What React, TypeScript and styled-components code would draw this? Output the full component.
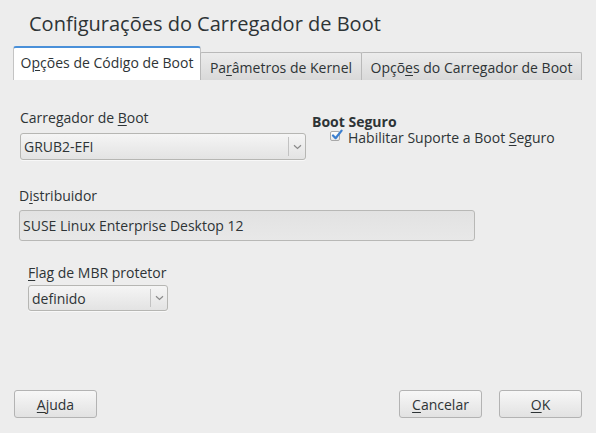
import React from "react";
import styled, { createGlobalStyle } from "styled-components";

const Global = createGlobalStyle`
  html, body { margin: 0; padding: 0; background: #ededed; }
  body { font-family: "Open Sans", "DejaVu Sans", sans-serif; color: #2e3436; }
`;

const Window = styled.div`
  width: 596px;
  height: 433px;
  background: #ededed;
  display: flex;
  flex-direction: column;
  box-sizing: border-box;
  overflow: hidden;
`;

const Title = styled.h1`
  margin: 0;
  padding: 12px 0 0 29px;
  font-size: 20px;
  line-height: 24px;
  font-weight: 400;
  color: #2e3436;
  height: 34px;
  box-sizing: border-box;
`;

const TabBar = styled.div`
  display: flex;
  align-items: flex-end;
  margin: 12px 0 0 13px;
  height: 34px;
`;

const Tab = styled.div<{ $active?: boolean; $w: number }>`
  box-sizing: border-box;
  width: ${(p) => p.$w}px;
  height: ${(p) => (p.$active ? 34 : 28)}px;
  display: flex;
  align-items: center;
  justify-content: center;
  font-size: 14px;
  color: #2e3436;
  white-space: nowrap;
  border: 1px solid ${(p) => (p.$active ? "#c4c4c4" : "#b9b9b9")};
  border-bottom: none;
  border-radius: ${(p) => (p.$active ? "3px 3px 0 0" : "2px 2px 0 0")};
  background: ${(p) =>
    p.$active ? "#ffffff" : "linear-gradient(#ececec, #d9d9d9)"};
  ${(p) => (p.$active ? "border-top: 2px solid #4a90d9; padding-bottom: 4px;" : "padding-top: 1px;")}
  margin-left: ${(p) => (p.$active ? 0 : -1)}px;
`;

const Content = styled.div`
  display: flex;
  flex-direction: column;
  padding: 29px 0 0 0;
  flex: 1;
`;

const TopRow = styled.div`
  display: flex;
  align-items: flex-start;
`;

const Field = styled.div<{ $left: number; $top?: number }>`
  display: flex;
  flex-direction: column;
  margin-left: ${(p) => p.$left}px;
  margin-top: ${(p) => p.$top ?? 0}px;
`;

const Label = styled.label`
  font-size: 14px;
  line-height: 17px;
  color: #2e3436;
  height: 17px;
  white-space: nowrap;
`;

const U = styled.span`
  text-decoration: underline;
  text-underline-offset: 2px;
`;

const Combo = styled.div<{ $w: number; $h: number; $mt: number }>`
  box-sizing: border-box;
  width: ${(p) => p.$w}px;
  height: ${(p) => p.$h}px;
  margin-top: ${(p) => p.$mt}px;
  border: 1px solid #b6b6b3;
  border-radius: 3px;
  background: linear-gradient(#f5f5f5, #e3e3e3);
  display: flex;
  align-items: center;
  font-size: 14px;
  color: #2e3436;
  box-shadow: 0 1px 0 rgba(255, 255, 255, 0.6);
`;

const ComboText = styled.span`
  flex: 1;
  padding-left: 3px;
`;

const ComboSep = styled.span`
  align-self: stretch;
  width: 1px;
  margin: 3px 0;
  background: #c2c2c2;
`;

const ComboArrow = styled.span`
  width: 16px;
  display: flex;
  align-items: center;
  justify-content: center;
`;

const SecureBlock = styled.div`
  display: flex;
  flex-direction: column;
  margin-left: 6px;
  margin-top: 4px;
`;

const BoldLabel = styled.div`
  font-size: 14px;
  line-height: 17px;
  font-weight: 700;
  color: #2e3436;
`;

const CheckRow = styled.div`
  display: flex;
  align-items: center;
  gap: 8px;
  margin-left: 18px;
  font-size: 14px;
  line-height: 17px;
  margin-top: -1px;
  white-space: nowrap;
`;

const CheckBox = styled.span`
  width: 10px;
  height: 10px;
  box-sizing: border-box;
  border: 1px solid #a8a8a8;
  border-radius: 2px;
  background: linear-gradient(#ffffff, #e8e8e8);
  position: relative;
  margin-top: -3px;
`;

const CheckMark = styled.svg`
  position: absolute;
  left: 0px;
  top: -3px;
`;

const Entry = styled.div`
  box-sizing: border-box;
  width: 456px;
  height: 31px;
  margin-top: 6px;
  border: 1px solid #b8b8b6;
  border-radius: 3px;
  background: linear-gradient(#e2e2e2, #e8e8e8);
  display: flex;
  align-items: center;
  padding-left: 3px;
  font-size: 14px;
  color: #2e3436;
`;

const Buttons = styled.div`
  display: flex;
  align-items: center;
  padding: 0 14px 15px 14px;
`;

const Spacer = styled.div`
  flex: 1;
`;

const Button = styled.button<{ $gap?: number }>`
  box-sizing: border-box;
  width: 83px;
  height: 28px;
  margin-left: ${(p) => p.$gap ?? 0}px;
  border: 1px solid #b3b3b3;
  border-radius: 3px;
  background: linear-gradient(#f7f7f7, #e2e2e2);
  font-family: "Open Sans", "DejaVu Sans", sans-serif;
  font-size: 14px;
  color: #2e3436;
  padding: 0;
`;

const Arrow = () => (
  <svg width="9" height="6" viewBox="0 0 9 6">
    <path d="M1 1.2 L4.5 4.5 L8 1.2" fill="none" stroke="#8a8a8a" strokeWidth="1.2" />
  </svg>
);

export default function App() {
  return (
    <>
      <Global />
      <Window>
        <Title>Configurações do Carregador de Boot</Title>
        <TabBar>
          <Tab $active $w={188}>
            <span>O<U>p</U>ções de Código de Boot</span>
          </Tab>
          <Tab $w={162}>
            <span>Pa<U>r</U>âmetros de Kernel</span>
          </Tab>
          <Tab $w={221}>
            <span>Opçõ<U>e</U>s do Carregador de Boot</span>
          </Tab>
        </TabBar>
        <Content>
          <TopRow>
            <Field $left={20}>
              <Label>Carregador de <U>B</U>oot</Label>
              <Combo $w={286} $h={27} $mt={7}>
                <ComboText>GRUB2-EFI</ComboText>
                <ComboSep />
                <ComboArrow><Arrow /></ComboArrow>
              </Combo>
            </Field>
            <SecureBlock>
              <BoldLabel>Boot Seguro</BoldLabel>
              <CheckRow>
                <CheckBox>
                  <CheckMark width="12" height="12" viewBox="0 0 12 12">
                    <path d="M2 6.5 L4.6 9.2 L10.6 1.6" fill="none" stroke="#3b7fd0" strokeWidth="2.2" strokeLinecap="round" strokeLinejoin="round" />
                  </CheckMark>
                </CheckBox>
                <span>Habilitar Suporte a Boot <U>S</U>eguro</span>
              </CheckRow>
            </SecureBlock>
          </TopRow>
          <Field $left={19} $top={27}>
            <Label>D<U>i</U>stribuidor</Label>
            <Entry>SUSE Linux Enterprise Desktop 12</Entry>
          </Field>
          <Field $left={28} $top={23}>
            <Label><U>F</U>lag de MBR protetor</Label>
            <Combo $w={140} $h={26} $mt={4}>
              <ComboText>definido</ComboText>
              <ComboSep />
              <ComboArrow><Arrow /></ComboArrow>
            </Combo>
          </Field>
        </Content>
        <Buttons>
          <Button><U>A</U>juda</Button>
          <Spacer />
          <Button><U>C</U>ancelar</Button>
          <Button $gap={17}><U>O</U>K</Button>
        </Buttons>
      </Window>
    </>
  );
}
